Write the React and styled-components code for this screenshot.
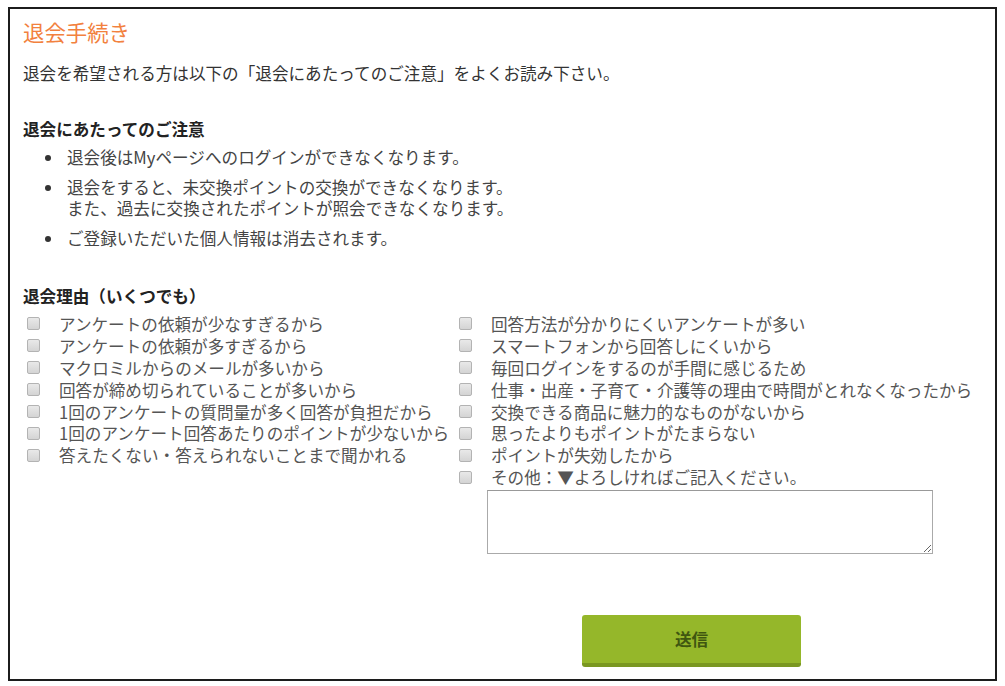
import React from "react";
import styled, { createGlobalStyle } from "styled-components";

const Global = createGlobalStyle`
  body {
    margin: 0;
    background: #fff;
    font-family: "Noto Sans CJK JP", "Noto Sans", sans-serif;
  }
`

const Frame = styled.div`
  box-sizing: border-box;
  margin: 7px 0 0 8px;
  width: 989px;
  height: 674px;
  border: 2px solid #1c1c1c;
  padding: 9px 0 0 13px;
  font-size: 16.6px;
  color: #333;
`

const Title = styled.h1`
  margin: 0;
  font-size: 21.4px;
  font-weight: normal;
  line-height: 28px;
  color: #f2813e;
`

const Intro = styled.p`
  margin: 16px 0 0;
  line-height: 22px;
  color: #333;
`

const Heading = styled.h2`
  margin: ${(p) => p.$top}px 0 0;
  font-size: 16.6px;
  font-weight: bold;
  line-height: 22px;
  color: #222;
`

const Notes = styled.ul`
  margin: 7px 0 0;
  padding: 0 0 0 21px;
  list-style: none;
`

const Note = styled.li`
  position: relative;
  padding-left: 23px;
  line-height: 21px;
  color: #444;
  & + & {
    margin-top: 9px;
  }
  &::before {
    content: "";
    position: absolute;
    left: 1px;
    top: 8px;
    width: 6px;
    height: 6px;
    border-radius: 50%;
    background: #333;
  }
`

const Reasons = styled.div`
  margin: 6px 0 0 4px;
  display: grid;
  grid-template-columns: 432px 1fr;
  align-items: start;
`

const Column = styled.div`
  display: flex;
  flex-direction: column;
`

const Reason = styled.label`
  display: flex;
  align-items: center;
  height: 21.9px;
  white-space: nowrap;
  color: #555;
`

const Box = styled.input.attrs({ type: "checkbox" })`
  appearance: none;
  box-sizing: border-box;
  margin: 0 19px 0 0;
  width: 13px;
  height: 13px;
  flex: none;
  border: 1px solid #b3b3b3;
  border-radius: 2px;
  background: linear-gradient(#e9e9e9, #d4d4d4);
`

const Memo = styled.textarea`
  box-sizing: border-box;
  margin: 2px 0 0 28px;
  width: 446px;
  height: 64px;
  border: 1px solid #aaa;
  border-top-color: #999;
  resize: both;
  font-family: inherit;
`

const Send = styled.button`
  display: block;
  margin: 61px 0 0 559px;
  width: 219px;
  height: 52px;
  border: none;
  border-bottom: 4px solid #7a9721;
  border-radius: 3px;
  background: #95b72a;
  color: #3f5610;
  font-family: inherit;
  font-size: 16.6px;
  font-weight: bold;
`

const left = [
  "アンケートの依頼が少なすぎるから",
  "アンケートの依頼が多すぎるから",
  "マクロミルからのメールが多いから",
  "回答が締め切られていることが多いから",
  "1回のアンケートの質問量が多く回答が負担だから",
  "1回のアンケート回答あたりのポイントが少ないから",
  "答えたくない・答えられないことまで聞かれる",
]

const right = [
  "回答方法が分かりにくいアンケートが多い",
  "スマートフォンから回答しにくいから",
  "毎回ログインをするのが手間に感じるため",
  "仕事・出産・子育て・介護等の理由で時間がとれなくなったから",
  "交換できる商品に魅力的なものがないから",
  "思ったよりもポイントがたまらない",
  "ポイントが失効したから",
  "その他：▼よろしければご記入ください。",
]

export default function App() {
  return (
    <>
      <Global />
      <Frame>
        <Title>退会手続き</Title>
        <Intro>退会を希望される方は以下の「退会にあたってのご注意」をよくお読み下さい。</Intro>

        <Heading $top={34}>退会にあたってのご注意</Heading>
        <Notes>
          <Note>退会後はMyページへのログインができなくなります。</Note>
          <Note>
            退会をすると、未交換ポイントの交換ができなくなります。
            <br />
            また、過去に交換されたポイントが照会できなくなります。
          </Note>
          <Note>ご登録いただいた個人情報は消去されます。</Note>
        </Notes>

        <Heading $top={36}>退会理由（いくつでも）</Heading>
        <Reasons>
          <Column>
            {left.map((r) => (
              <Reason key={r}>
                <Box />
                {r}
              </Reason>
            ))}
          </Column>
          <Column>
            {right.map((r) => (
              <Reason key={r}>
                <Box />
                {r}
              </Reason>
            ))}
            <Memo />
          </Column>
        </Reasons>

        <Send>送信</Send>
      </Frame>
    </>
  );
}
